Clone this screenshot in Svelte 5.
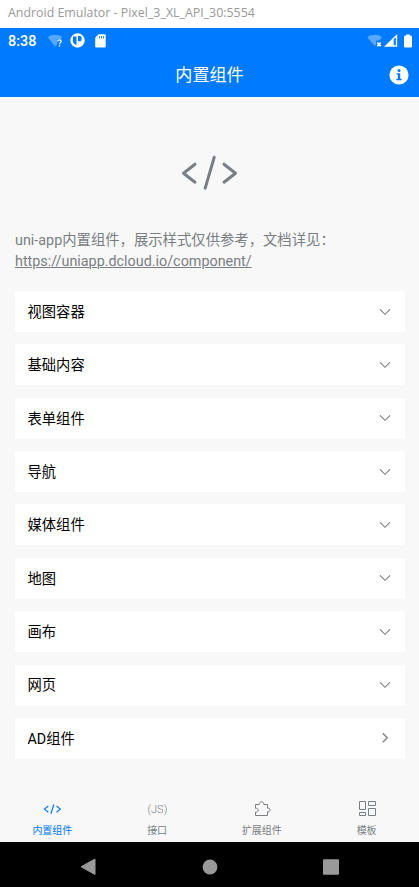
<script>
    const groups = [
        { name: '视图容器' },
        { name: '基础内容' },
        { name: '表单组件' },
        { name: '导航' },
        { name: '媒体组件' },
        { name: '地图' },
        { name: '画布' },
        { name: '网页' },
        { name: 'AD组件', link: true }
    ];

    const tabs = [
        { id: 'component', label: '内置组件' },
        { id: 'api', label: '接口' },
        { id: 'extui', label: '扩展组件' },
        { id: 'template', label: '模板' }
    ];

    let active = $state('component');
</script>

<div class="window">
    <div class="window-title"><span>Android Emulator - Pixel_3_XL_API_30:5554</span></div>

    <header>
        <div class="status">
            <span class="time">8:38</span>
            <svg class="wifi" width="16" height="14" viewBox="0 0 16 14">
                <path d="M-0.2 3.2C4 0 10 0 14.2 3.2L12.3 5.3H9V10.5L7 12.4z" fill="#fff" opacity="0.35" />
                <path d="M9.8 7.4c0-2 3.4-2 3.4 0 0 1.2-1.7 1.3-1.7 2.8M11.5 11.2v1.3" fill="none" stroke="#fff" stroke-width="1.3" />
            </svg>
            <svg class="app" width="15" height="15" viewBox="0 0 15 15">
                <circle cx="7.5" cy="7.5" r="7.2" fill="#fff" />
                <path d="M3 3.5H6.5V12C4 11.3 2.8 9.5 2.8 7.5z" fill="#007aff" />
                <path d="M8 3H10.5C12 3.5 12 8 10.5 8.2H8z" fill="#007aff" />
            </svg>
            <svg class="card" width="11" height="14" viewBox="0 0 11 14">
                <path d="M3.7 0.3H9.7Q10.7 0.3 10.7 1.3V12.5Q10.7 13.5 9.7 13.5H1.2Q0.2 13.5 0.2 12.5V3.8z" fill="#fff" />
                <path d="M4.5 2V4.5M6.5 2V4.5M8.5 2V4.5" stroke="#007aff" stroke-width="0.8" />
            </svg>
            <svg class="wifi-off" width="16" height="14" viewBox="0 0 16 14">
                <path d="M0.3 3.2C4.5 0 10.8 0 15 3.2L12.3 6.5H9V10.5L7.7 12z" fill="#fff" opacity="0.35" />
                <path d="M10.3 8.5l3.4 3.6M13.7 8.5l-3.4 3.6" stroke="#fff" stroke-width="1.7" />
            </svg>
            <svg class="signal" width="14" height="13" viewBox="0 0 14 13">
                <path d="M13.2 0V12.7H0z" fill="#fff" />
                <path d="M9.7 5.3L11.8 3.2V11.2H9.7z" fill="#007aff" />
            </svg>
            <svg class="battery" width="8" height="14" viewBox="0 0 8 14">
                <path d="M2 0.5H6V1.8H7.2Q8 1.8 8 2.6V12.6Q8 13.4 7.2 13.4H0.8Q0 13.4 0 12.6V2.6Q0 1.8 0.8 1.8H2z" fill="#fff" />
            </svg>
        </div>
        <div class="nav">
            <h1>内置组件</h1>
            <button class="info" aria-label="info">
                <svg width="20" height="20" viewBox="0 0 20 20">
                    <circle cx="10" cy="10" r="9.6" fill="#fff" />
                    <circle cx="10" cy="5.4" r="1.5" fill="#007aff" />
                    <path d="M7.6 8.2H11.2V13.8H12.6V15.2H7.4V13.8H8.9V9.5H7.6z" fill="#007aff" />
                </svg>
            </button>
        </div>
    </header>

    <main>
        <svg class="logo" width="58" height="38" viewBox="0 0 58 38" fill="none" stroke="#7a7e83" stroke-width="3" stroke-linecap="round" stroke-linejoin="round">
            <path d="M14 10.2L2.5 19.2L14 28.2M43 10.2L54.5 19.2L43 28.2M33.2 3.3L24.2 34.2" />
        </svg>

        <p class="intro">uni-app内置组件，展示样式仅供参考，文档详见：<br /><span class="url">https://uniapp.dcloud.io/component/</span></p>

        <ul>
            {#each groups as group}
                <li>
                    <span>{group.name}</span>
                    <svg width="12" height="12" viewBox="0 0 12 12" fill="none" stroke={group.link ? '#888' : '#808080'} stroke-width={group.link ? 1.5 : 1.1}>
                        {#if group.link}
                            <path d="M3.8 1.4L8.2 5.8L3.8 10.2" />
                        {:else}
                            <path d="M1 3.3L6 8.3L11 3.3" />
                        {/if}
                    </svg>
                </li>
            {/each}
        </ul>
    </main>

    <nav class="tabbar">
        {#each tabs as tab}
            <button class:active={active === tab.id} onclick={() => (active = tab.id)}>
                <svg width="22" height="18" viewBox="0 0 22 18" fill="none" stroke="currentColor">
                    {#if tab.id === 'component'}
                        <path d="M7.3 6L3.5 9.1L7.3 12.2M15.5 6L19.3 9.1L15.5 12.2M12.8 4.5L9.9 13.8" stroke-width="1.2" />
                    {:else if tab.id === 'api'}
                        <text x="11.4" y="12.7" text-anchor="middle" fill="currentColor" stroke="none">(JS)</text>
                    {:else if tab.id === 'extui'}
                        <path d="M4.5 4.5H8.2C8.2 0.8 12.8 0.8 12.8 4.5H16.5V8.2C20 7.5 20 12.5 16.5 11.8V15.5H4.5V12.1C8 12.8 8 7.6 4.5 8.3z" stroke-linejoin="round" />
                    {:else}
                        <path d="M3.5 1.5H9.5V9.5H3.5zM12.5 1.5H19.5V5.5H12.5zM3.5 12.5H9.5V15.5H3.5zM12.5 8.5H19.5V15.5H12.5z" />
                    {/if}
                </svg>
                <span>{tab.label}</span>
            </button>
        {/each}
    </nav>

    <div class="keys">
        <svg width="16" height="18" viewBox="0 0 16 18"><path d="M15 1V16.5L1 8.8z" fill="#999" stroke="#999" stroke-linejoin="round" /></svg>
        <svg width="16" height="16" viewBox="0 0 16 16"><circle cx="8" cy="8" r="7.4" fill="#999" /></svg>
        <svg width="16" height="16" viewBox="0 0 16 16"><rect y="0.3" width="16" height="15.4" rx="1" fill="#999" /></svg>
    </div>
</div>

<style>
    :global(body) {
        margin: 0;
        background: #f8f8f8;
    }

    .window {
        display: flex;
        flex-direction: column;
        width: 419px;
        height: 887px;
        overflow: hidden;
        background: #f8f8f8;
        font-family: Roboto, "Noto Sans CJK SC", sans-serif;
    }

    svg {
        display: block;
        flex: none;
    }

    button {
        padding: 0;
        border: 0;
        background: none;
        font: inherit;
        cursor: pointer;
    }

    .window-title {
        height: 28px;
        padding-left: 8px;
        background: #fff;
        color: #999;
        font: 12.4px/26px "Open Sans", sans-serif;
        white-space: nowrap;
    }

    header {
        height: 69px;
        background: #007aff;
        color: #fff;
    }

    .status {
        display: flex;
        align-items: center;
        height: 25px;
        padding: 0 7px 0 8px;
    }

    .time {
        width: 40px;
        padding-top: 1px;
        font-size: 14.4px;
        font-weight: 500;
    }

    .app {
        margin-left: 6px;
    }

    .card {
        margin-left: 10px;
    }

    .wifi-off {
        margin-left: auto;
    }

    .signal {
        margin-left: 1px;
    }

    .battery {
        margin-left: 6px;
    }

    .nav {
        display: grid;
        grid-template-columns: 40px 1fr 40px;
        align-items: center;
        height: 44px;
    }

    h1 {
        grid-column: 2;
        margin: 0;
        font-size: 17.1px;
        font-weight: 400;
        line-height: 44px;
        text-align: center;
    }

    .info {
        margin-left: 10px;
    }

    main {
        flex: 1;
        padding: 0 14.5px 0 15px;
    }

    .logo {
        margin: 57px auto 39px;
    }

    .intro {
        margin: 0;
        color: #7a7e83;
        font-size: 14.35px;
        line-height: 20.5px;
        white-space: nowrap;
    }

    .url {
        text-decoration: underline;
        text-decoration-thickness: 1px;
    }

    ul {
        display: flex;
        flex-direction: column;
        gap: 12.36px;
        margin: 19px 0 0;
        padding: 0;
        list-style: none;
    }

    li {
        display: flex;
        align-items: center;
        justify-content: space-between;
        height: 41px;
        padding: 0 13.5px 0 12.5px;
        background: #fff;
        color: #000;
        font-size: 14.3px;
    }

    li span {
        padding-bottom: 2.4px;
    }

    .tabbar {
        display: grid;
        grid-template-columns: repeat(4, 1fr);
        height: 42px;
    }

    .tabbar button {
        display: flex;
        flex-direction: column;
        align-items: center;
        color: #7a7e83;
        font-size: 10px;
        line-height: 26px;
    }

    .tabbar button.active {
        color: #007aff;
    }

    .tabbar text {
        font-size: 11px;
        font-weight: 300;
    }

    .keys {
        display: flex;
        align-items: center;
        justify-content: space-between;
        height: 45px;
        padding: 4px 80px 0;
        box-sizing: border-box;
        background: #000;
    }
</style>
